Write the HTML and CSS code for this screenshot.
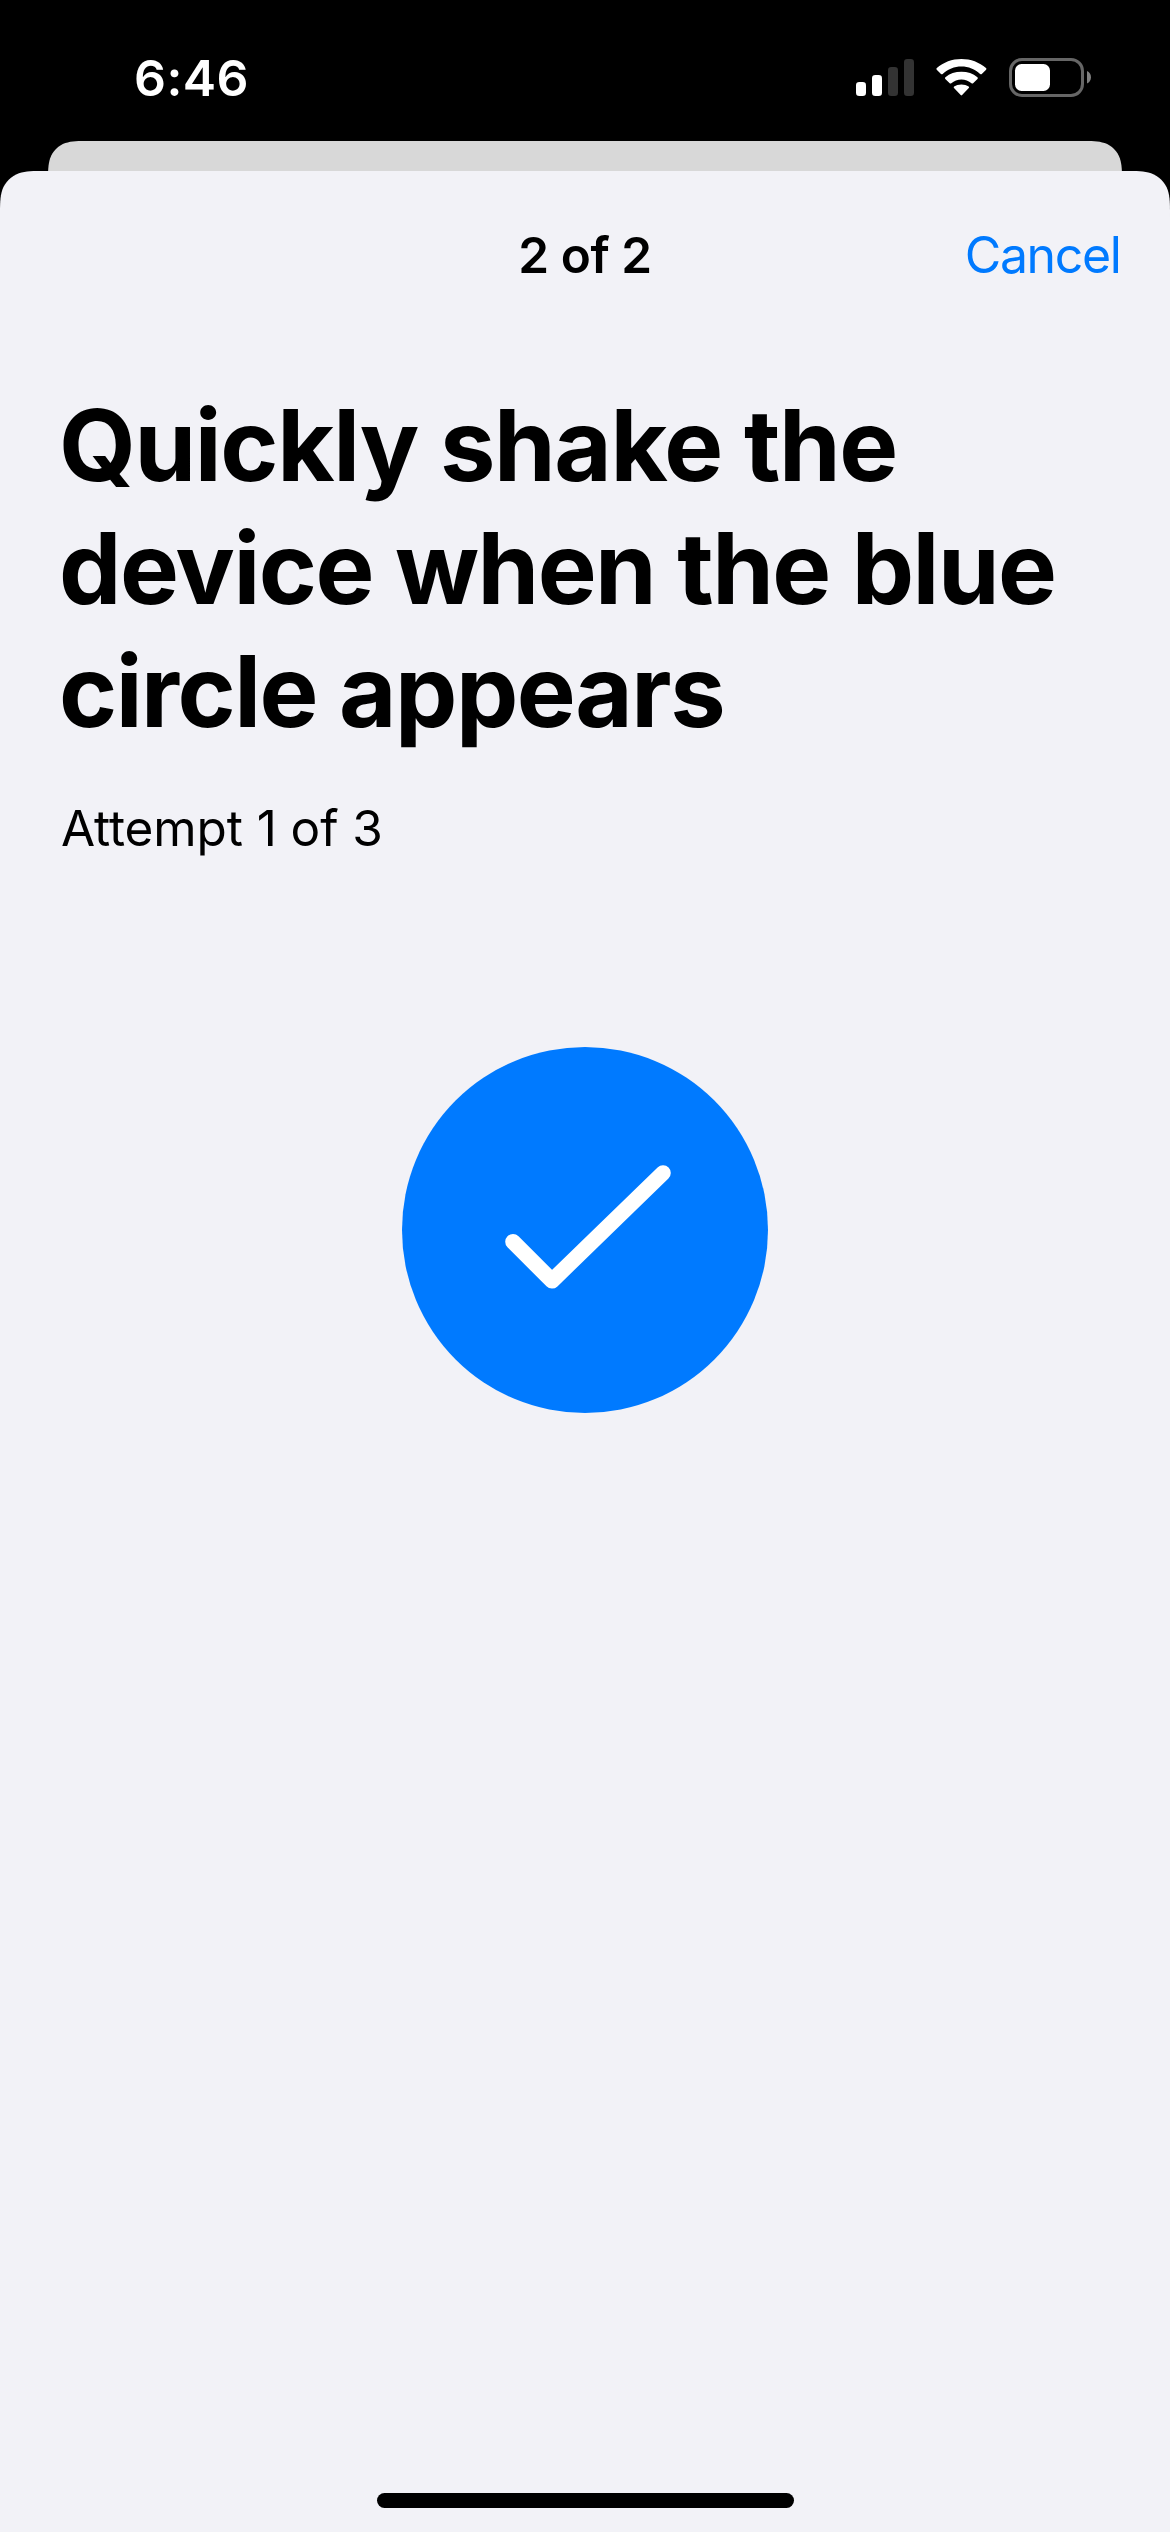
FILE: index.html
```html
<!DOCTYPE html>
<html lang="en">
<head>
<meta charset="utf-8">
<title>Shake test</title>
<link rel="stylesheet" href="styles.css">
</head>
<body>
<div class="status-bar">
  <span class="status-time">6:46</span>
  <div class="status-icons">
    <svg class="signal" width="58" height="37" viewBox="0 0 58 37" fill="#fff" aria-label="Signal">
      <rect x="0" y="23" width="10" height="14" rx="3.3"/>
      <rect x="16" y="16" width="10" height="21" rx="3.3"/>
      <rect x="32" y="8" width="10" height="29" rx="3.3" fill="#333"/>
      <rect x="48" y="0" width="10" height="37" rx="3.3" fill="#333"/>
    </svg>
    <svg class="wifi" width="51" height="37" viewBox="0 0 51 37" fill="#fff" aria-label="Wi-Fi">
      <path d="M25.4 7.4C32.4 7.4 39 10 44.1 14.9Q45 15.7 45.8 14.9L50.1 10.7Q50.9 9.9 50 9.1C43.4 3.2 34.7 0 25.4 0S7.4 3.2 0.8 9.1Q0 9.9 0.7 10.7L5 14.9Q5.8 15.7 6.7 14.9C11.8 10 18.4 7.4 25.4 7.4Z"/>
      <path d="M25.4 20.4C29.2 20.4 32.7 21.7 35.5 24.2Q36.3 24.9 37.1 24.2L41.5 19.9Q42.3 19 41.4 18.2C37.1 14.6 31.5 12.8 25.4 12.8S13.7 14.6 9.4 18.2Q8.5 19 9.3 19.9L13.7 24.2Q14.5 24.9 15.3 24.2C18.1 21.7 21.6 20.4 25.4 20.4Z"/>
      <path d="M32.8 28.9Q33.5 28.2 32.7 27.5C30.7 26.3 28.2 25.5 25.4 25.5S20.1 26.3 18.1 27.5Q17.3 28.2 18 28.9L24.7 36.1Q25.4 36.8 26.1 36.1Z"/>
    </svg>
    <svg class="battery" width="82" height="39" viewBox="0 0 82 39" aria-label="Battery">
      <rect x="1.5" y="1.5" width="72" height="36" rx="11.5" fill="none" stroke="#666" stroke-width="3"/>
      <path d="M78 13C80.5 14 82 16.5 82 19.3S80.5 24.6 78 25.6Z" fill="#808080"/>
      <rect x="6" y="6" width="35" height="27" rx="6.5" fill="#fff"/>
    </svg>
  </div>
</div>
<div class="back-sheet"></div>
<main class="sheet">
  <header class="nav">
    <span class="nav-title">2 of 2</span>
    <a class="nav-cancel">Cancel</a>
  </header>
  <h1 class="title"><span class="line-a">Quickly shake the</span> <span class="line-b">device when the blue</span> <span class="line-c">circle appears</span></h1>
  <p class="attempt">Attempt 1 of 3</p>
  <div class="circle">
    <svg width="366" height="366" viewBox="0 0 366 366" aria-label="Done">
      <path d="M111 194.7L150 233.8L261 126" fill="none" stroke="#fff" stroke-width="15.6" stroke-linecap="round" stroke-linejoin="round"/>
    </svg>
  </div>
  <div class="home-indicator"></div>
</main>
</body>
</html>
```

FILE: styles.css
```css
* { box-sizing: border-box; }

body {
  margin: 0;
  width: 1170px;
  height: 2532px;
  display: flex;
  flex-direction: column;
  overflow: hidden;
  background: #000;
  color: #000;
  font-family: Inter, "Liberation Sans", sans-serif;
}

.status-bar {
  height: 141px;
  flex: none;
  display: flex;
  justify-content: space-between;
  align-items: flex-start;
  padding: 48px 79px 0 134px;
}

.status-time {
  color: #fff;
  font-size: 50px;
  font-weight: 600;
  line-height: 60px;
  letter-spacing: 0.45px;
}

.status-icons {
  display: flex;
  align-items: center;
  gap: 22px;
  margin-top: 10px;
}

.back-sheet {
  flex: none;
  width: 1074px;
  height: 30px;
  margin: 0 auto;
  background: #d8d8d8;
  clip-path: path("M0 42C0 29.9 0 23.9 2.06 17.4C4.65 10.25 10.25 4.65 17.4 2.06C23.9 0 29.9 0 42 0H1032C1044.1 0 1050.1 0 1056.6 2.06C1063.75 4.65 1069.35 10.25 1071.94 17.4C1074 23.9 1074 29.9 1074 42Z");
}

.sheet {
  flex: 1;
  display: flex;
  flex-direction: column;
  background: #f2f2f7;
  clip-path: path("M0 45.86C0 32.65 0 26.05 2.25 18.94C5.07 11.18 11.18 5.07 18.94 2.25C26.05 0 32.65 0 45.86 0H1124.14C1137.35 0 1143.95 0 1151.06 2.25C1158.82 5.07 1164.93 11.18 1167.75 18.94C1170 26.05 1170 32.65 1170 45.86V2361H0Z");
}

.nav {
  display: grid;
  grid-template-columns: 1fr auto 1fr;
  padding: 54px 48px 0;
  line-height: 60px;
}

.nav-title {
  grid-column: 2;
  font-size: 49.5px;
  font-weight: 600;
  letter-spacing: -0.42px;
}

.nav-cancel {
  justify-self: end;
  margin-right: 1.5px;
  color: #007aff;
  font-size: 50px;
  letter-spacing: -1.37px;
}

.title {
  display: flex;
  flex-direction: column;
  margin: 99px 59px 0;
  font-size: 99px;
  font-weight: 700;
  line-height: 123px;
}

.line-a { letter-spacing: -1.37px; }
.line-b { letter-spacing: -1.51px; }
.line-c { letter-spacing: -1.49px; }

.attempt {
  margin: 45px 61px 0;
  font-size: 49.5px;
  line-height: 60px;
  letter-spacing: -0.1px;
}

.circle {
  width: 366px;
  height: 366px;
  margin: 189px auto 0;
  border-radius: 50%;
  background: #007aff;
}

.circle svg { display: block; }

.home-indicator {
  width: 417px;
  height: 15px;
  margin: auto auto 24px;
  border-radius: 7.5px;
  background: #000;
}
```
